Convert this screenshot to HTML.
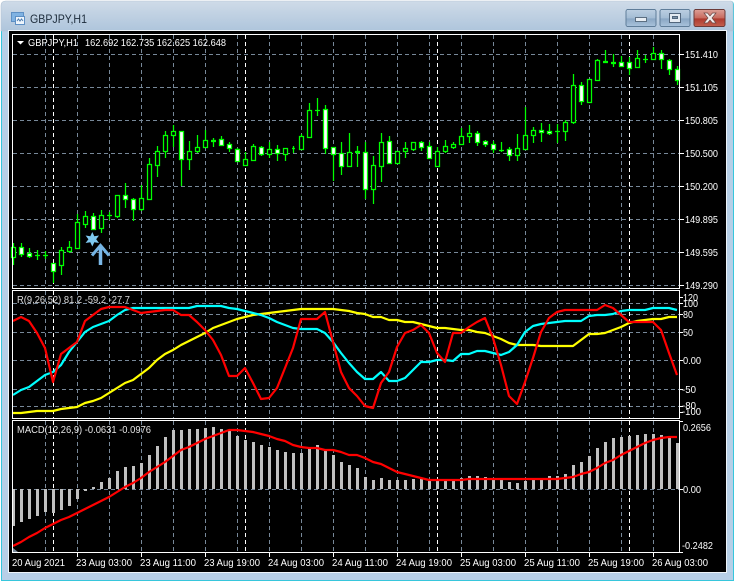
<!DOCTYPE html>
<html><head><meta charset="utf-8"><style>
html,body{margin:0;padding:0;background:#fff;width:737px;height:582px;overflow:hidden}
svg{display:block;position:absolute;left:0;top:0}
text{font-family:"Liberation Sans",sans-serif;font-size:10.5px;fill:#fff}
.t{font-size:12px;fill:#1c2b3a}
</style></head><body>
<svg width="737" height="582" viewBox="0 0 737 582" xmlns="http://www.w3.org/2000/svg">
<defs>
<linearGradient id="ti" x1="0" y1="0" x2="0" y2="1"><stop offset="0" stop-color="#cfdbe8"/><stop offset="1" stop-color="#aec5dc"/></linearGradient>
<linearGradient id="btn" x1="0" y1="0" x2="0" y2="1"><stop offset="0" stop-color="#bccfe2"/><stop offset=".5" stop-color="#a3bcd4"/><stop offset=".55" stop-color="#8aa7c4"/><stop offset="1" stop-color="#a9c3dc"/></linearGradient>
<linearGradient id="cl" x1="0" y1="0" x2="0" y2="1"><stop offset="0" stop-color="#dca098"/><stop offset=".5" stop-color="#c96a5e"/><stop offset=".55" stop-color="#ae3a2e"/><stop offset="1" stop-color="#c4604f"/></linearGradient>
</defs>
<path d="M1.500 581V6Q1.500 1.500 6 1.500H731Q733.500 1.500 733.500 6V580.500H1.500Z" fill="#b7cfe7" stroke="#37c6dc"/>
<path d="M1 31V6Q1 1 6 1H731Q733 1 733 6V31Z" fill="url(#ti)" stroke="#b4c4d4" stroke-width=".6"/>
<rect x="8" y="30" width="719" height="543" fill="#eef4fa"/>
<rect x="9" y="31" width="717" height="541" fill="#000"/>

<g fill="none" shape-rendering="crispEdges">
<rect x="626" y="9.500" width="30" height="17" rx="2" fill="url(#btn)" stroke="#5f7d99"/>
<rect x="660" y="9.500" width="30" height="17" rx="2" fill="url(#btn)" stroke="#5f7d99"/>
<rect x="694" y="9.500" width="31" height="17" rx="2" fill="url(#cl)" stroke="#6b3a38"/>
<rect x="635.500" y="17.500" width="11" height="4" fill="#e8eef4" stroke="#5c6f82"/>
<rect x="669.500" y="13.500" width="11" height="9" fill="#e4ebf2" stroke="#51667c"/>
<rect x="672.500" y="16.500" width="5" height="2" fill="#7d93a8" stroke="#51667c"/>
</g>
<path d="M704 13l3.500 0 2.500 3 2.500-3 3.500 0-4 5 4 5-3.500 0-2.500-3-2.500 3-3.500 0 4-5z" fill="#f3eeee" stroke="#6b4a48" stroke-width=".7"/>

<rect x="11.500" y="12.500" width="12" height="9" fill="#7fb2e2" stroke="#5d8fc4"/>
<rect x="15.500" y="16.500" width="9" height="8" fill="#eef5fc" stroke="#5d8fc4"/>
<path d="M17 21l1.500-2 1.500 2 1.500-2 1.500 2" fill="none" stroke="#4d7db0"/>
<text class="t" x="30" y="23" textLength="57" lengthAdjust="spacingAndGlyphs">GBPJPY,H1</text>

<g stroke="#778899" stroke-dasharray="4 3" fill="none" shape-rendering="crispEdges">
<path d="M13 54.500H679M13 87.500H679M13 120.500H679M13 153.500H679M13 186.500H679M13 219.500H679M13 252.500H679M13 285.500H679"/>
<path d="M13 303.500H679M13 314.500H679M13 332.500H679M13 360.500H679M13 389.500H679M13 406.500H679M13 489.500H679"/>
<path d="M45.500 35V288M77.500 35V288M109.500 35V288M141.500 35V288M173.500 35V288M205.500 35V288M237.500 35V288M269.500 35V288M301.500 35V288M333.500 35V288M365.500 35V288M397.500 35V288M429.500 35V288M461.500 35V288M493.500 35V288M525.500 35V288M557.500 35V288M589.500 35V288M621.500 35V288M653.500 35V288"/>
<path d="M45.500 291V418M77.500 291V418M109.500 291V418M141.500 291V418M173.500 291V418M205.500 291V418M237.500 291V418M269.500 291V418M301.500 291V418M333.500 291V418M365.500 291V418M397.500 291V418M429.500 291V418M461.500 291V418M493.500 291V418M525.500 291V418M557.500 291V418M589.500 291V418M621.500 291V418M653.500 291V418"/>
<path d="M45.500 421V552M77.500 421V552M109.500 421V552M141.500 421V552M173.500 421V552M205.500 421V552M237.500 421V552M269.500 421V552M301.500 421V552M333.500 421V552M365.500 421V552M397.500 421V552M429.500 421V552M461.500 421V552M493.500 421V552M525.500 421V552M557.500 421V552M589.500 421V552M621.500 421V552M653.500 421V552"/>
<path stroke="#fff" d="M53.500 35V288M245.500 35V288M437.500 35V288M629.500 35V288M53.500 291V418M245.500 291V418M437.500 291V418M629.500 291V418M53.500 421V552M245.500 421V552M437.500 421V552M629.500 421V552"/>
</g>

<g stroke-width="1.250">
<path fill="none" stroke="#00ff00" d="M13.500 243V265M21.500 243V257M29.500 248V258M37.500 250V260M45.500 251V259M53.500 263V283M61.500 247V275M69.500 241V253M77.500 214V249M85.500 211V228M93.500 213V229M101.500 210V233M109.500 212V220M117.500 195V218M125.500 183V208M133.500 198V221M141.500 185V211M149.500 158V200M157.500 146V177M165.500 131V158M173.500 125V147M181.500 131V186M189.500 141V170M197.500 135V153M205.500 130V147M213.500 138V147M221.500 136V145M229.500 142V152M237.500 148V161M245.500 152V165M253.500 144V161M261.500 146V156M269.500 142V158M277.500 145V161M285.500 148V161M293.500 146V153M301.500 134V149M309.500 103V138M317.500 98V116M325.500 105V154M333.500 147V181M341.500 142V175M349.500 133V166M357.500 146V167M365.500 142V199M373.500 156V204M381.500 133V182M389.500 136V163M397.500 151V163M405.500 142V158M413.500 142V151M421.500 141V151M429.500 142V158M437.500 147V166M445.500 140V153M453.500 142V149M461.500 128V144M469.500 125V143M477.500 131V146M485.500 140V147M493.500 141V153M501.500 142V152M509.500 147V161M517.500 134V161M525.500 107V149M533.500 127V143M541.500 123V142M549.500 124V135M557.500 124V143M565.500 120V141M573.500 74V124M581.500 82V105M589.500 79V102M597.500 59V81M605.500 50V63M613.500 54V67M621.500 56V66M629.500 57V75M637.500 50V68M645.500 55V63M653.500 47V60M661.500 50V69M669.500 59V75M677.500 66V85"/>
<path fill="none" stroke="#00ff00" d="M35 255.500h5M43 255.500h5M107 215.500h5M292 148.500h3M211 140.500h5M211 141.500h5M355 151.500h5M355 152.500h5M499 150.500h5M555 131.500h5M603 61.500h5M603 62.500h5M611 62.500h5M611 63.500h5M643 59.500h5M315 110.500h5"/>
<path fill="#000" stroke="#00ff00" d="M11.500 247.500h4v10h-4zM59.500 250.500h4v15h-4zM67.500 247.500h4v4h-4zM75.500 222.500h4v26h-4zM83.500 216.500h4v8h-4zM99.500 215.500h4v13h-4zM115.500 195.500h4v21h-4zM139.500 198.500h4v11h-4zM147.500 164.500h4v35h-4zM155.500 151.500h4v14h-4zM163.500 135.500h4v16h-4zM171.500 131.500h4v4h-4zM187.500 151.500h4v8h-4zM195.500 147.500h4v4h-4zM203.500 140.500h4v7h-4zM243.500 159.500h4v6h-4zM251.500 146.500h4v14h-4zM267.500 149.500h4v5h-4zM283.500 148.500h4v6h-4zM299.500 136.500h4v13h-4zM307.500 110.500h4v27h-4zM347.500 152.500h4v14h-4zM371.500 165.500h4v24h-4zM379.500 142.500h4v24h-4zM395.500 151.500h4v12h-4zM403.500 148.500h4v3h-4zM411.500 142.500h4v7h-4zM435.500 151.500h4v15h-4zM443.500 146.500h4v5h-4zM451.500 144.500h4v3h-4zM459.500 136.500h4v8h-4zM467.500 133.500h4v3h-4zM515.500 148.500h4v7h-4zM523.500 135.500h4v14h-4zM531.500 130.500h4v5h-4zM563.500 122.500h4v9h-4zM571.500 85.500h4v37h-4zM587.500 79.500h4v23h-4zM595.500 60.500h4v20h-4zM635.500 58.500h4v9h-4zM651.500 53.500h4v6h-4z"/>
<path fill="#fff" stroke="#00ff00" d="M19.500 247.500h4v7h-4zM27.500 253.500h4v3h-4zM51.500 263.500h4v8h-4zM91.500 216.500h4v13h-4zM123.500 195.500h4v4h-4zM131.500 199.500h4v10h-4zM179.500 131.500h4v28h-4zM219.500 139.500h4v6h-4zM227.500 144.500h4v4h-4zM235.500 149.500h4v12h-4zM259.500 147.500h4v7h-4zM275.500 149.500h4v4h-4zM323.500 109.500h4v39h-4zM331.500 147.500h4v7h-4zM339.500 153.500h4v13h-4zM363.500 152.500h4v37h-4zM387.500 141.500h4v22h-4zM419.500 142.500h4v5h-4zM427.500 146.500h4v12h-4zM475.500 133.500h4v9h-4zM483.500 141.500h4v3h-4zM491.500 144.500h4v5h-4zM507.500 149.500h4v6h-4zM539.500 130.500h4v2h-4zM547.500 131.500h4v2h-4zM579.500 85.500h4v16h-4zM619.500 62.500h4v4h-4zM627.500 62.500h4v6h-4zM659.500 53.500h4v6h-4zM667.500 60.500h4v9h-4zM675.500 69.500h4v11h-4z"/>
</g>

<path d="M92.300 232l2 4.200 4.700-.7-2.800 3.700 2.800 3.800-4.700-.8-2 4.300-2-4.300-4.700.8 2.800-3.800-2.800-3.700 4.700.7z" fill="#7ec8f0"/>
<path d="M92 255.500l8.500-10 8.500 10" fill="none" stroke="#74b4e4" stroke-width="3"/>
<path d="M100.500 247V265" fill="none" stroke="#7ab8e8" stroke-width="3.500"/>

<g fill="none" stroke-width="2.200" stroke-linejoin="round">
<polyline stroke="#ffff00" points="13,413 21,413 29,412 37,411 45,411 53,411 61,409 69,408 77,407 85,403 93,401 101,398 109,393 117,388 125,383 133,380 141,374 149,368 157,360 165,354 173,350 181,345 189,341 197,337 205,333 213,328 221,325 229,322 237,319 245,317 253,315 261,314 269,313 277,312 285,311 293,310 301,309 309,309 317,309 325,309 333,309 341,310 349,311 357,313 365,314 373,317 381,317 389,320 397,320 405,322 413,322 421,324 429,326 437,328 445,328 453,329 461,330 469,330 477,332 485,333 493,336 501,339 509,343 517,345 525,345 533,345 541,346 549,346 557,346 565,346 573,346 581,340 589,334 597,334 605,333 613,330 621,327 629,323 637,321 645,320 653,319 661,319 669,317 677,317"/>
<polyline stroke="#00ffff" points="13,395 21,390 29,387 37,381 45,375 53,372 61,365 69,352 77,342 85,332 93,327 101,324 109,321 117,315 125,310 133,308 141,308 149,308 157,308 165,308 173,308 181,308 189,308 197,306 205,306 213,306 221,306 229,308 237,309 245,311 253,313 261,315 269,318 277,322 285,325 293,328 301,329 309,329 317,329 325,333 333,342 341,353 349,363 357,372 365,379 373,379 381,372 389,381 397,381 405,378 413,370 421,362 429,362 437,360 445,360 453,361 461,354 469,354 477,351 485,351 493,353 501,355 509,352 517,345 525,332 533,326 541,324 549,323 557,322 565,321 573,321 581,321 589,316 597,315 605,315 613,314 621,311 629,310 637,310 645,310 653,308 661,308 669,308 677,310"/>
<polyline stroke="#ff0000" points="13,321 21,317 29,321 37,333 45,348 53,382 61,354 69,348 77,342 85,321 93,315 101,309 109,307 117,307 125,307 133,310 141,313 149,312 157,311 165,310 173,310 181,315 189,315 197,322 205,330 213,340 221,355 229,376 237,376 245,368 253,383 261,399 269,398 277,388 285,368 293,348 301,319 309,319 317,319 325,312 333,342 341,372 349,388 357,396 365,406 373,408 381,383 389,372 397,347 405,333 413,330 421,325 429,333 437,353 445,362 453,333 461,333 469,327 477,322 485,318 493,338 501,365 509,396 517,404 525,382 533,358 541,332 549,318 557,312 565,310 573,310 581,310 589,310 597,310 605,305 613,308 621,315 629,322 637,322 645,322 653,322 661,330 669,353 677,375"/>
</g>

<path fill="#c0c0c0" shape-rendering="crispEdges" d="M13 489h2v37h-2zM20 489h3v33h-3zM28 489h3v30h-3zM36 489h3v27h-3zM44 489h3v23h-3zM52 489h3v24h-3zM60 489h3v21h-3zM68 489h3v17h-3zM76 489h3v10h-3zM84 489h3v2h-3zM92 487h3v2h-3zM100 482h3v7h-3zM108 478h3v11h-3zM116 471h3v18h-3zM124 467h3v22h-3zM132 466h3v23h-3zM140 463h3v26h-3zM148 455h3v34h-3zM156 446h3v43h-3zM164 437h3v52h-3zM172 430h3v59h-3zM180 430h3v59h-3zM188 429h3v60h-3zM196 429h3v60h-3zM204 428h3v61h-3zM212 427h3v62h-3zM220 429h3v60h-3zM228 430h3v59h-3zM236 436h3v53h-3zM244 440h3v49h-3zM252 442h3v47h-3zM260 445h3v44h-3zM268 447h3v42h-3zM276 450h3v39h-3zM284 452h3v37h-3zM292 453h3v36h-3zM300 453h3v36h-3zM308 449h3v40h-3zM316 445h3v44h-3zM324 450h3v39h-3zM332 455h3v34h-3zM340 462h3v27h-3zM348 465h3v24h-3zM356 468h3v21h-3zM364 477h3v12h-3zM372 480h3v9h-3zM380 478h3v11h-3zM388 480h3v9h-3zM396 480h3v9h-3zM404 480h3v9h-3zM412 479h3v10h-3zM420 478h3v11h-3zM428 480h3v9h-3zM436 479h3v10h-3zM444 481h3v8h-3zM452 481h3v8h-3zM460 478h3v11h-3zM468 476h3v13h-3zM476 476h3v13h-3zM484 477h3v12h-3zM492 480h3v9h-3zM500 480h3v9h-3zM508 482h3v7h-3zM516 483h3v6h-3zM524 481h3v8h-3zM532 480h3v9h-3zM540 480h3v9h-3zM548 476h3v13h-3zM556 476h3v13h-3zM564 474h3v15h-3zM572 465h3v24h-3zM580 462h3v27h-3zM588 456h3v33h-3zM596 448h3v41h-3zM604 442h3v47h-3zM612 438h3v51h-3zM620 437h3v52h-3zM628 436h3v53h-3zM636 435h3v54h-3zM644 434h3v55h-3zM652 434h3v55h-3zM660 435h3v54h-3zM668 436h3v53h-3zM676 443h3v46h-3z"/>
<polyline fill="none" stroke="#ff0000" stroke-width="2.200" stroke-linejoin="round" points="13,546 21,542 29,537 37,533 45,528 53,524 61,520 69,517 77,513 85,509 93,505 101,501 109,497 117,492 125,487 133,483 141,478 149,472 157,467 165,462 173,456 181,450 189,447 197,443 205,439 213,436 221,433 229,430 237,430 245,431 253,432 261,434 269,436 277,439 285,441 293,445 301,447 309,448 317,448 325,450 333,450 341,452 349,455 357,455 365,458 373,462 381,464 389,468 397,472 405,474 413,476 421,478 429,480 437,480 445,480 453,480 461,480 469,479 477,479 485,479 493,479 501,479 509,479 517,479 525,479 533,479 541,479 549,479 557,479 565,478 573,477 581,474 589,472 597,468 605,463 613,460 621,455 629,451 637,447 645,443 653,440 661,438 669,437 677,437"/>
<path d="M13 548l5 4h-5z" fill="#778899"/>

<g fill="none" stroke="#fff" shape-rendering="crispEdges">
<rect x="12.500" y="34.500" width="667" height="254"/>
<rect x="12.500" y="290.500" width="667" height="128"/>
<rect x="12.500" y="420.500" width="667" height="132"/>
<path d="M680 54.500h4M680 87.500h4M680 120.500h4M680 153.500h4M680 186.500h4M680 219.500h4M680 252.500h4M680 285.500h4M680 297.500h3M680 303.500h3M680 314.500h3M680 332.500h3M680 360.500h3M680 389.500h3M680 406.500h3M680 412.500h3M680 421.500h3M680 489.500h3M680 552.500h3M77.500 553v4M141.500 553v4M205.500 553v4M269.500 553v4M333.500 553v4M397.500 553v4M461.500 553v4M525.500 553v4M589.500 553v4M653.500 553v4"/>
</g>

<path d="M17 41h7l-3.500 3.500z" fill="#fff"/>
<text x="28" y="46" textLength="50" lengthAdjust="spacingAndGlyphs">GBPJPY,H1</text>
<text x="85" y="46" textLength="141" lengthAdjust="spacingAndGlyphs">162.692 162.735 162.625 162.648</text>
<text x="17" y="303" textLength="113" lengthAdjust="spacingAndGlyphs" fill-opacity=".85">R(9,26,52) 81.2 -59.2 -27.7</text>
<text x="17" y="433" textLength="134" lengthAdjust="spacingAndGlyphs" fill-opacity=".9">MACD(12,26,9) -0.0631 -0.0976</text>

<text x="685" y="58" textLength="33" lengthAdjust="spacingAndGlyphs">151.410</text>
<text x="685" y="91" textLength="33" lengthAdjust="spacingAndGlyphs">151.105</text>
<text x="685" y="124" textLength="33" lengthAdjust="spacingAndGlyphs">150.805</text>
<text x="685" y="157" textLength="33" lengthAdjust="spacingAndGlyphs">150.500</text>
<text x="685" y="190" textLength="33" lengthAdjust="spacingAndGlyphs">150.200</text>
<text x="685" y="223" textLength="33" lengthAdjust="spacingAndGlyphs">149.895</text>
<text x="685" y="256" textLength="33" lengthAdjust="spacingAndGlyphs">149.595</text>
<text x="685" y="289" textLength="33" lengthAdjust="spacingAndGlyphs">149.290</text>

<text x="683" y="301" textLength="15" lengthAdjust="spacingAndGlyphs">120</text>
<text x="683" y="307" textLength="15" lengthAdjust="spacingAndGlyphs">100</text>
<text x="683" y="318" textLength="10" lengthAdjust="spacingAndGlyphs">80</text>
<text x="683" y="336" textLength="10" lengthAdjust="spacingAndGlyphs">50</text>
<text x="683" y="364" textLength="18" lengthAdjust="spacingAndGlyphs">0.00</text>
<text x="682" y="393" textLength="14" lengthAdjust="spacingAndGlyphs">-50</text>
<text x="682" y="409" textLength="14" lengthAdjust="spacingAndGlyphs">-80</text>
<text x="682" y="415" textLength="19" lengthAdjust="spacingAndGlyphs">-100</text>

<text x="683" y="431" textLength="28" lengthAdjust="spacingAndGlyphs">0.2656</text>
<text x="683" y="493" textLength="18" lengthAdjust="spacingAndGlyphs">0.00</text>
<text x="682" y="549" textLength="31" lengthAdjust="spacingAndGlyphs">-0.2482</text>

<text x="12" y="566" textLength="53" lengthAdjust="spacingAndGlyphs">20 Aug 2021</text>
<text x="76" y="566" textLength="56" lengthAdjust="spacingAndGlyphs">23 Aug 03:00</text>
<text x="140" y="566" textLength="56" lengthAdjust="spacingAndGlyphs">23 Aug 11:00</text>
<text x="204" y="566" textLength="56" lengthAdjust="spacingAndGlyphs">23 Aug 19:00</text>
<text x="268" y="566" textLength="56" lengthAdjust="spacingAndGlyphs">24 Aug 03:00</text>
<text x="332" y="566" textLength="56" lengthAdjust="spacingAndGlyphs">24 Aug 11:00</text>
<text x="396" y="566" textLength="56" lengthAdjust="spacingAndGlyphs">24 Aug 19:00</text>
<text x="460" y="566" textLength="56" lengthAdjust="spacingAndGlyphs">25 Aug 03:00</text>
<text x="524" y="566" textLength="56" lengthAdjust="spacingAndGlyphs">25 Aug 11:00</text>
<text x="588" y="566" textLength="56" lengthAdjust="spacingAndGlyphs">25 Aug 19:00</text>
<text x="652" y="566" textLength="56" lengthAdjust="spacingAndGlyphs">26 Aug 03:00</text>
</svg>
</body></html>
